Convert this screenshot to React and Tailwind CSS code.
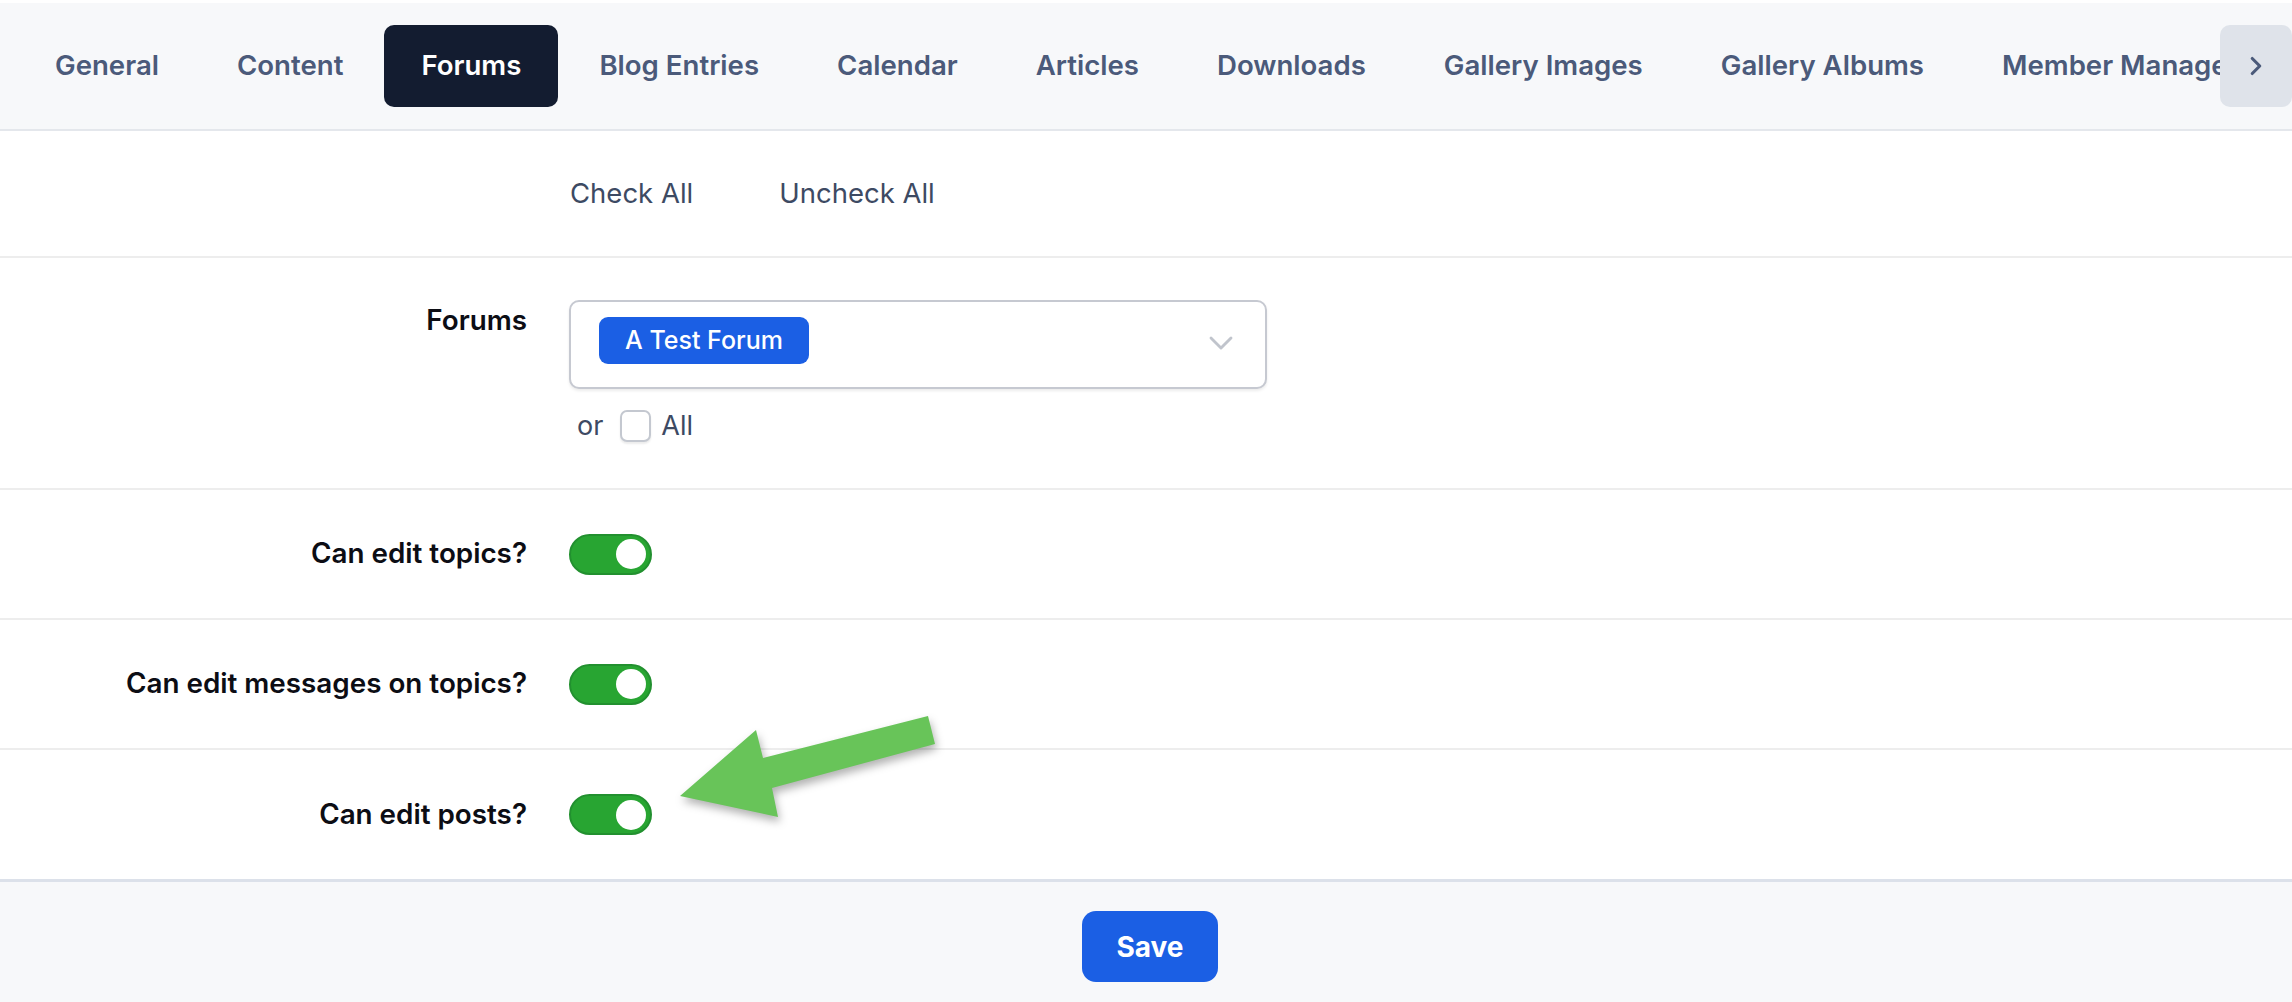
import { ChevronRight, ChevronDown } from "lucide-react";

const tabs = [
  "General",
  "Content",
  "Forums",
  "Blog Entries",
  "Calendar",
  "Articles",
  "Downloads",
  "Gallery Images",
  "Gallery Albums",
  "Member Management",
];

const Toggle = () => (
  <div className="flex h-[41px] w-[83px] items-center justify-end rounded-full border-2 border-[#22902f] bg-[#28a532] pr-[4px]">
    <div className="h-[30px] w-[30px] rounded-full bg-white" />
  </div>
);

const SettingRow = ({ label, last }) => (
  <div className={last ? "flex h-[129px] items-center" : "flex h-[130px] items-center border-b-2 border-[#ededed]"}>
    <div className="w-[527px] text-right text-[27.8px] font-semibold text-[#0c0d14]">{label}</div>
    <div className="ml-[42px]">
      <Toggle />
    </div>
  </div>
);

export default function App() {
  return (
    <div className="relative min-h-screen bg-white pt-[3px] font-['Inter',sans-serif]">
      {/* Tab strip */}
      <div className="relative h-[128px] overflow-hidden border-b-2 border-[#e4e7ec] bg-[#f7f8fa]">
        <div className="flex h-full items-center gap-[4px] whitespace-nowrap pl-[18px] pr-[72px]">
          {tabs.map((tab) => (
            <div
              key={tab}
              className={
                tab === "Forums"
                  ? "flex h-[82px] items-center rounded-[10px] bg-[#131c30] px-[37px] text-[27.6px] font-semibold text-white"
                  : "flex h-[82px] items-center px-[37px] text-[27.6px] font-semibold text-[#4b5a7a]"
              }
            >
              {tab}
            </div>
          ))}
        </div>
        <button className="absolute right-0 top-[22px] flex h-[82px] w-[72px] items-center justify-center rounded-[10px] bg-[#dfe3ea] text-[#4b5a7a]">
          <ChevronRight size={30} strokeWidth={2.5} />
        </button>
      </div>

      {/* Check all / uncheck all */}
      <div className="flex h-[127px] items-center border-b-2 border-[#ededed]">
        <div className="ml-[570px] flex gap-[86px] text-[27.5px] text-[#3d4a63]">
          <span>Check All</span>
          <span>Uncheck All</span>
        </div>
      </div>

      {/* Forum picker */}
      <div className="flex h-[232px] items-start border-b-2 border-[#ededed] pt-[42px]">
        <div className="w-[527px] text-right text-[27.8px] font-semibold leading-[40px] text-[#0c0d14]">Forums</div>
        <div className="ml-[42px]">
          <div className="flex h-[89px] w-[698px] items-start justify-between rounded-[10px] border-2 border-[#c6c9d1] bg-white pl-[28px] pr-[24px] pt-[15px] shadow-[0_2px_3px_rgba(0,0,0,0.08)]">
            <div className="flex h-[47px] items-center rounded-[9px] bg-[#1b5fe4] px-[26px] text-[25px] font-medium text-white">
              A Test Forum
            </div>
            <ChevronDown size={40} strokeWidth={1.7} className="mt-[6px] text-[#c0c4cc]" />
          </div>
          <div className="mt-[17px] flex items-center pl-[8px] text-[27px] text-[#3d4a63]">
            <span>or</span>
            <span className="ml-[17px] h-[32px] w-[31px] rounded-[7px] border-2 border-[#c4c8d0] bg-white shadow-[0_2px_2px_rgba(0,0,0,0.08)]" />
            <span className="ml-[10px]">All</span>
          </div>
        </div>
      </div>

      <SettingRow label="Can edit topics?" />
      <SettingRow label="Can edit messages on topics?" />
      <SettingRow label="Can edit posts?" last />

      {/* Footer */}
      <div className="flex justify-center border-t-[3px] border-[#dce1ea] bg-[#f7f8fa] pb-[30px] pl-[8px] pt-[29px]">
        <button className="h-[71px] w-[136px] rounded-[14px] bg-[#1b5fe4] text-[28px] font-bold text-white">Save</button>
      </div>

      {/* Callout arrow */}
      <svg
        className="pointer-events-none absolute left-[640px] top-[690px] drop-shadow-[2px_5px_4px_rgba(0,0,0,0.3)]"
        width="320"
        height="150"
        viewBox="0 0 320 150"
      >
        <polygon points="40,106 116,40 123,68 288,26 295,54 132,98 138,127" fill="#68c459" />
      </svg>
    </div>
  );
}
